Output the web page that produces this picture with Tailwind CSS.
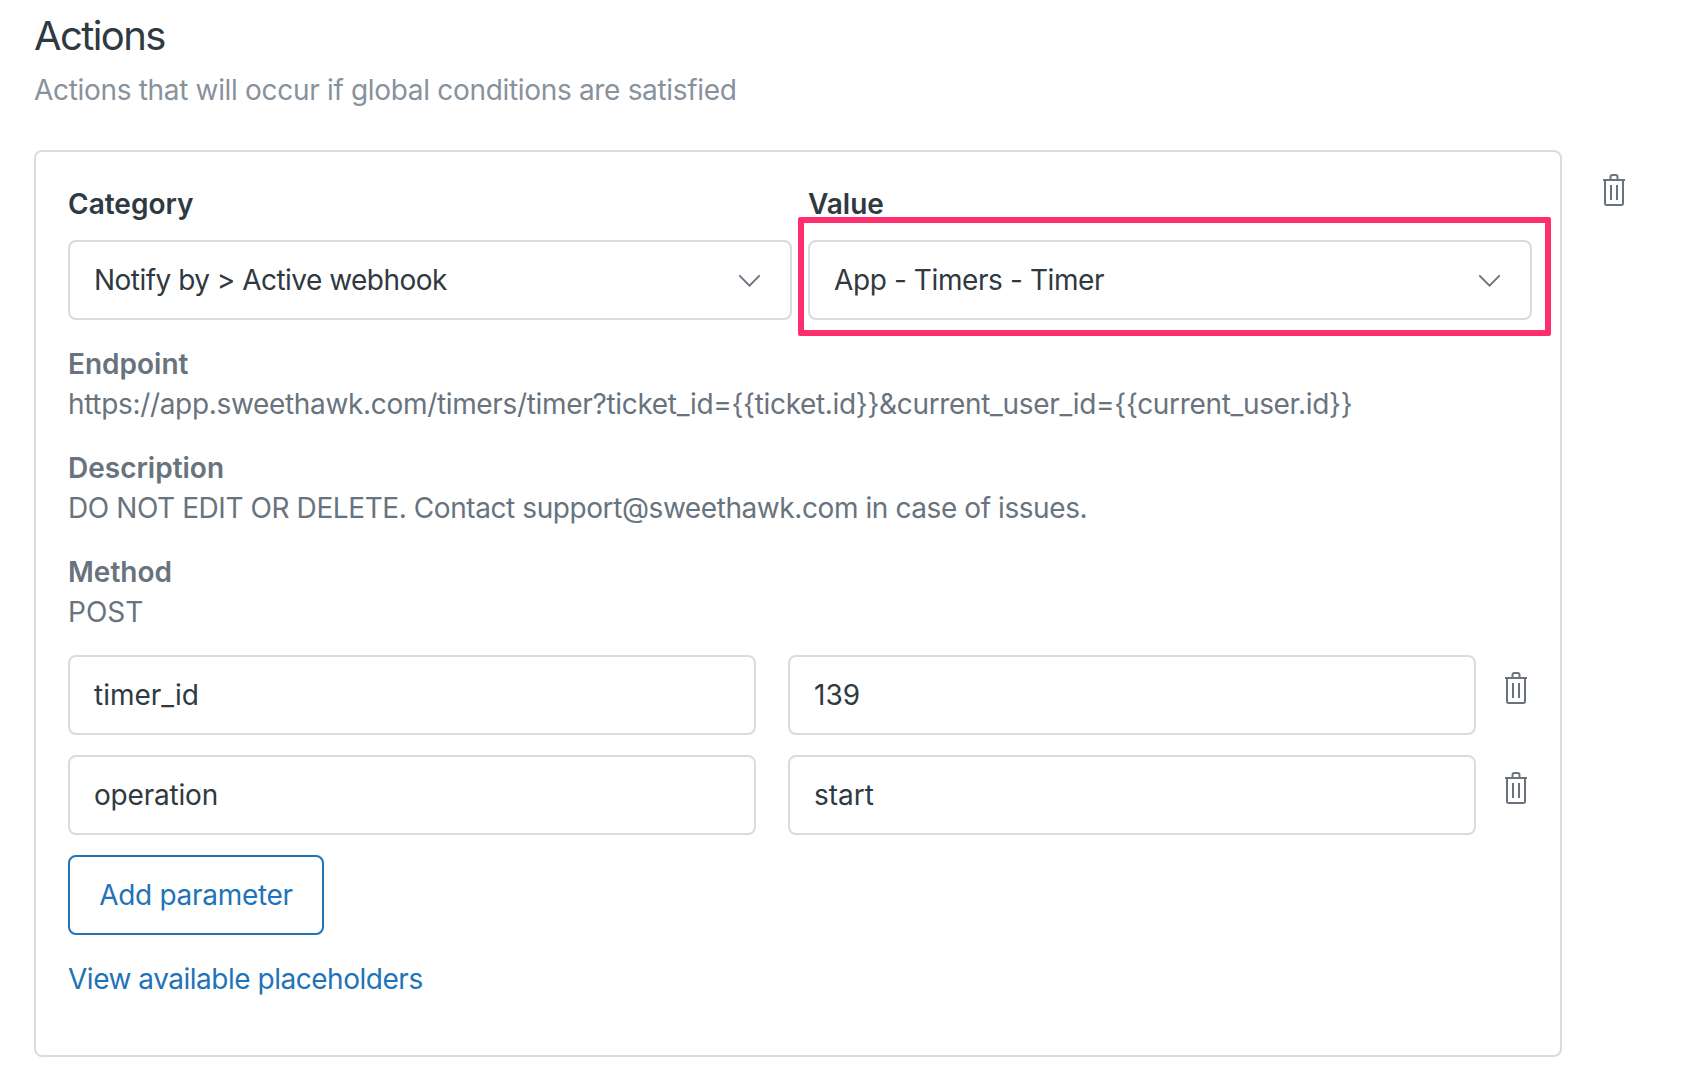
<!DOCTYPE html>
<html lang="en">
<head>
  <meta charset="UTF-8" />
  <title>Actions</title>
  <script src="https://cdn.jsdelivr.net/npm/@tailwindcss/browser@4"></script>
</head>
<body class="bg-white text-[#2f3941] font-['Inter',sans-serif] text-[28px] leading-[40px]">
  <main class="w-[1688px] h-[1080px] overflow-hidden pl-[34px] pt-[14px]">
    <h1 class="text-[40px] leading-[44px] font-normal tracking-[-1.6px]">Actions</h1>
    <p class="mt-[12px] text-[#87929d] tracking-[-0.32px]">Actions that will occur if global conditions are satisfied</p>

    <div class="flex items-start mt-[40px]">
      <section class="w-[1528px] h-[907px] border-2 border-[#d8dcde] rounded-[8px] pl-[32px] pr-[18px] pt-[32px]">
        <div class="grid grid-cols-[724px_724px] gap-x-[16px]">
          <div>
            <label class="block font-semibold h-[56px]">Category</label>
            <div class="flex items-center justify-between h-[80px] border-2 border-[#d8dcde] rounded-[8px] pl-[24px] pr-[29px]">
              <span class="tracking-[-0.52px]">Notify by &gt; Active webhook</span>
              <svg width="23" height="13" viewBox="0 0 24 14" fill="none" stroke="#68737d" stroke-width="2"><path d="M1 1.5l11 11 11-11"/></svg>
            </div>
          </div>
          <div class="relative">
            <label class="block font-semibold h-[56px]">Value</label>
            <div class="flex items-center justify-between h-[80px] border-2 border-[#d8dcde] rounded-[8px] pl-[24px] pr-[29px]">
              <span class="tracking-[-0.4px]">App - Timers - Timer</span>
              <svg width="23" height="13" viewBox="0 0 24 14" fill="none" stroke="#68737d" stroke-width="2"><path d="M1 1.5l11 11 11-11"/></svg>
            </div>
            <div class="absolute left-[-10px] top-[33px] w-[753px] h-[119px] border-[6px] border-[#ff2e6c] rounded-[2px]"></div>
          </div>
        </div>

        <dl class="mt-[24px] text-[#68737d]">
          <dt class="font-semibold">Endpoint</dt>
          <dd class="tracking-[-0.33px]">https://app.sweethawk.com/timers/timer?ticket_id={{ticket.id}}&amp;current_user_id={{current_user.id}}</dd>
          <dt class="font-semibold mt-[24px]">Description</dt>
          <dd class="tracking-[-0.42px]">DO NOT EDIT OR DELETE. Contact support@sweethawk.com in case of issues.</dd>
          <dt class="font-semibold mt-[24px]">Method</dt>
          <dd>POST</dd>
        </dl>

        <div class="mt-[23px] flex flex-col gap-[20px]">
          <div class="flex items-start gap-[32px]">
            <div class="w-[688px] h-[80px] flex items-center border-2 border-[#d8dcde] rounded-[8px] px-[24px]">timer_id</div>
            <div class="w-[688px] h-[80px] flex items-center border-2 border-[#d8dcde] rounded-[8px] px-[24px]">139</div>
            <svg class="ml-[-3px] mt-[17px]" width="22" height="32" viewBox="0 0 22 32" fill="none" stroke="#68737d" stroke-width="2"><path d="M0 6h22M2 6v23.5a1.5 1.5 0 0 0 1.5 1.5h15a1.500 1.500 0 0 0 1.500-1.500V6M7.500 6V3a2 2 0 0 1 2-2h3a2 2 0 0 1 2 2v3M8 11v15M14 11v15"/></svg>
          </div>
          <div class="flex items-start gap-[32px]">
            <div class="w-[688px] h-[80px] flex items-center border-2 border-[#d8dcde] rounded-[8px] px-[24px] tracking-[-0.2px]">operation</div>
            <div class="w-[688px] h-[80px] flex items-center border-2 border-[#d8dcde] rounded-[8px] px-[24px]">start</div>
            <svg class="ml-[-3px] mt-[17px]" width="22" height="32" viewBox="0 0 22 32" fill="none" stroke="#68737d" stroke-width="2"><path d="M0 6h22M2 6v23.5a1.5 1.5 0 0 0 1.5 1.5h15a1.500 1.500 0 0 0 1.500-1.500V6M7.500 6V3a2 2 0 0 1 2-2h3a2 2 0 0 1 2 2v3M8 11v15M14 11v15"/></svg>
          </div>
        </div>

        <button class="block mt-[20px] w-[256px] h-[80px] border-2 border-[#1f73b7] rounded-[8px] text-[#1f73b7] tracking-[-0.3px]">Add parameter</button>
        <a class="block mt-[24px] text-[#1f73b7] tracking-[-0.48px]">View available placeholders</a>
      </section>
      <svg class="ml-[41px] mt-[24px]" width="22" height="32" viewBox="0 0 22 32" fill="none" stroke="#68737d" stroke-width="2"><path d="M0 6h22M2 6v23.5a1.5 1.5 0 0 0 1.5 1.5h15a1.500 1.500 0 0 0 1.500-1.500V6M7.500 6V3a2 2 0 0 1 2-2h3a2 2 0 0 1 2 2v3M8 11v15M14 11v15"/></svg>
    </div>
  </main>
</body>
</html>
